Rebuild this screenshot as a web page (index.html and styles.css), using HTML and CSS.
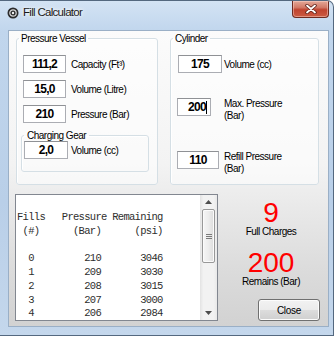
FILE: index.html
```html
<!DOCTYPE html>
<html lang="en">

<head>
    <meta charset="UTF-8">
    <meta name="viewport" content="width=device-width, initial-scale=1.0">
    <title>Fill Calculator</title>
    <link rel="stylesheet" href="styles.css">
</head>

<body>

    <div class="window">
        <div class="titlebar">
            <svg class="app-icon" width="12" height="12" viewBox="0 0 12 12">
                <circle cx="6" cy="6" r="5.5" fill="#2b2b2b" />
                <circle cx="6" cy="6" r="3.2" fill="none" stroke="#d8d8d8" stroke-width="1.2" />
                <circle cx="6" cy="6" r="1.2" fill="#f2f2f2" />
            </svg>
            <span class="title">Fill Calculator</span>
            <div class="close-btn">
                <svg width="12" height="10" viewBox="0 0 12 10">
                    <path d="M2 1.5 L10 8.5 M10 1.5 L2 8.5" stroke="#5a1d14" stroke-width="3.4" stroke-linecap="round" />
                    <path d="M2 1.5 L10 8.5 M10 1.5 L2 8.5" stroke="#ffffff" stroke-width="1.8" stroke-linecap="round" />
                </svg>
            </div>
        </div>

        <div class="client">
            <div class="top">
                <fieldset class="group vessel">
                    <legend>Pressure Vessel</legend>
                    <div class="field">
                        <div class="box">111,2</div>
                        <span class="label">Capacity (Ft³)</span>
                    </div>
                    <div class="field">
                        <div class="box">15,0</div>
                        <span class="label">Volume (Litre)</span>
                    </div>
                    <div class="field">
                        <div class="box">210</div>
                        <span class="label">Pressure (Bar)</span>
                    </div>
                    <fieldset class="group gear">
                        <legend>Charging Gear</legend>
                        <div class="field">
                            <div class="box">2,0</div>
                            <span class="label">Volume (cc)</span>
                        </div>
                    </fieldset>
                </fieldset>

                <fieldset class="group cylinder">
                    <legend>Cylinder</legend>
                    <div class="field">
                        <div class="box">175</div>
                        <span class="label">Volume (cc)</span>
                    </div>
                    <div class="field">
                        <div class="box narrow">200<span class="caret"></span></div>
                        <span class="label two-line">Max. Pressure<br>(Bar)</span>
                    </div>
                    <div class="field refill">
                        <div class="box">110</div>
                        <span class="label two-line">Refill Pressure<br>(Bar)</span>
                    </div>
                </fieldset>
            </div>

            <div class="bottom">
                <div class="listbox">
<pre class="table">Fills   Pressure Remaining
 (#)      (Bar)      (psi)

  0         210       3046
  1         209       3030
  2         208       3015
  3         207       3000
  4         206       2984</pre>
                    <div class="scrollbar">
                        <div class="arrow">
                            <svg width="7" height="4" viewBox="0 0 7 4"><polygon points="0,4 3.5,0 7,4" fill="#4d4d4d" /></svg>
                        </div>
                        <div class="track">
                            <div class="thumb">
                                <span class="grip"></span>
                                <span class="grip"></span>
                                <span class="grip"></span>
                            </div>
                        </div>
                        <div class="arrow">
                            <svg width="7" height="4" viewBox="0 0 7 4"><polygon points="0,0 7,0 3.5,4" fill="#4d4d4d" /></svg>
                        </div>
                    </div>
                </div>

                <div class="result">
                    <div class="big">9</div>
                    <div class="caption">Full Charges</div>
                    <div class="big second">200</div>
                    <div class="caption">Remains (Bar)</div>
                    <button class="close">Close</button>
                </div>
            </div>
        </div>
    </div>

</body>

</html>
```

FILE: styles.css
```css
* {
    box-sizing: border-box;
}

body {
    margin: 0;
    background: #ffffff;
    font-family: "Liberation Sans", Arial, sans-serif;
    font-size: 10px;
    letter-spacing: -0.5px;
    color: #000;
}

.window {
    width: 334px;
    height: 336px;
    display: flex;
    flex-direction: column;
    padding: 0 4px 8px 8px;
    border: 1px solid #54687f;
    border-left: none;
    border-radius: 0 7px 0 0;
    background: linear-gradient(180deg, #d3e3f4 0, #c1d6ed 30px, #b9cfe8 60%, #c4d7ec 100%);
    overflow: hidden;
}

.titlebar {
    height: 29px;
    flex-shrink: 0;
    display: flex;
    align-items: flex-start;
    margin-left: -1px;
}

.app-icon {
    margin-top: 6px;
}

.title {
    margin: 4px 0 0 4px;
    font-size: 11.5px;
    letter-spacing: -0.7px;
    line-height: 15px;
    color: #1a1a1a;
    text-shadow: 0 0 6px #ffffff, 0 0 3px #ffffff;
}

.close-btn {
    margin-left: auto;
    width: 37px;
    height: 17px;
    display: flex;
    align-items: center;
    justify-content: center;
    border: 1px solid #6e2a20;
    border-top: none;
    border-radius: 0 0 4px 4px;
    background: linear-gradient(180deg, #e4a898 0, #d27a68 40%, #c0432f 55%, #cc5b42 100%);
    box-shadow: inset 0 0 0 1px rgba(255, 220, 210, 0.45);
}

.client {
    flex: 1;
    min-height: 0;
    display: flex;
    flex-direction: column;
    padding-top: 2px;
    border: 1px solid #9aafc6;
    background: linear-gradient(180deg, #fbfbfb 0, #f3f3f3 45%, #dcdcdc 80%, #d2d2d2 100%);
}

.top {
    display: flex;
    flex-shrink: 0;
    gap: 12px;
    height: 152px;
    padding: 0 9px 0 7px;
}

.group {
    margin: 0;
    min-width: 0;
    border: 1px solid #d5dfe5;
    border-radius: 3px;
    background: rgba(255, 255, 255, 0.55);
    box-shadow: 1px 1px 0 #ffffff inset;
}

.group legend {
    padding: 0 2px;
    line-height: 11px;
    color: #000;
}

.vessel {
    width: 142px;
    padding: 11px 6px 0 6px;
}

.vessel>legend {
    margin-left: -4px;
}

.cylinder {
    width: 149px;
    padding: 11px 6px 0 7px;
}

.cylinder>legend {
    margin-left: -5px;
}

.field {
    display: flex;
    align-items: flex-start;
    gap: 5px;
}

.vessel>.field+.field {
    margin-top: 7px;
}

.box {
    position: relative;
    width: 43px;
    height: 18px;
    flex-shrink: 0;
    border: 1px solid #abadb3;
    border-top-color: #8f9195;
    background: #ffffff;
    font-size: 12px;
    font-weight: bold;
    letter-spacing: -0.7px;
    line-height: 16px;
    text-align: center;
}

.label {
    margin-top: 3px;
    line-height: 13px;
    white-space: nowrap;
}

.label.two-line {
    margin-top: 0;
    line-height: 12px;
}

.gear {
    width: 128px;
    margin: 7px 0 0 -2px;
    padding: 0 4px 12px 2px;
    background: transparent;
}

.gear>legend {
    padding: 0 3px;
}

.gear .box {
    width: 44px;
}

.gear .field {
    gap: 3px;
}

.cylinder .field {
    gap: 0;
}

.cylinder .box {
    width: 44px;
    margin-right: 2px;
}

.cylinder .box.narrow {
    width: 34px;
    margin: 0 13px 0 -1px;
    text-align: right;
    padding-right: 4px;
}

.cylinder .field+.field {
    margin-top: 25px;
}

.cylinder .field.refill {
    margin-top: 29px;
}

.cylinder .refill .box {
    width: 42px;
    margin: 0 5px 0 -1px;
}

.caret {
    position: absolute;
    top: 2px;
    right: 3px;
    width: 1px;
    height: 13px;
    background: #000;
}

.bottom {
    flex: 1;
    min-height: 0;
    display: flex;
    margin-top: 9px;
    padding: 0 0 5px 6px;
}

.listbox {
    width: 203px;
    display: flex;
    overflow: hidden;
    border: 1px solid #828790;
    background: #ffffff;
}

.table {
    flex: 1;
    margin: 0;
    padding: 16px 0 0 1px;
    overflow: hidden;
    font-family: "Liberation Mono", "Courier New", monospace;
    font-size: 10.5px;
    letter-spacing: -0.7px;
    line-height: 13.75px;
    color: #2e2e2e;
}

.scrollbar {
    width: 17px;
    display: flex;
    flex-direction: column;
    background: linear-gradient(90deg, #e3e3e3 0, #f2f2f2 20%, #f2f2f2 80%, #e9e9e9 100%);
}

.arrow {
    height: 14px;
    display: flex;
    align-items: center;
    justify-content: center;
}

.track {
    flex: 1;
}

.thumb {
    height: 54px;
    margin: 0 2px 0 2px;
    display: flex;
    flex-direction: column;
    align-items: center;
    justify-content: center;
    gap: 1px;
    border: 1px solid #989898;
    border-radius: 2px;
    background: linear-gradient(90deg, #f6f6f6 0, #ececec 50%, #dcdcdc 100%);
    box-shadow: inset 0 0 0 1px #fbfbfb;
}

.grip {
    width: 6px;
    height: 1px;
    background: #7a7a7a;
}

.result {
    flex: 1;
    display: flex;
    flex-direction: column;
    align-items: center;
    padding: 7px 8px 0 4px;
}

.big {
    font-size: 28px;
    letter-spacing: 0;
    line-height: 24px;
    color: #ff0000;
}

.big.second {
    margin-top: 13px;
}

.caption {
    line-height: 13px;
}

.close {
    margin-top: auto;
    align-self: flex-end;
    width: 62px;
    height: 22px;
    padding: 0;
    border: 1px solid #707070;
    border-radius: 3px;
    background: linear-gradient(180deg, #f2f2f2 0, #ebebeb 50%, #dddddd 51%, #cfcfcf 100%);
    box-shadow: inset 0 0 0 1px #fcfcfc;
    font-family: inherit;
    font-size: 10px;
    letter-spacing: -0.3px;
    color: #000;
}
```
